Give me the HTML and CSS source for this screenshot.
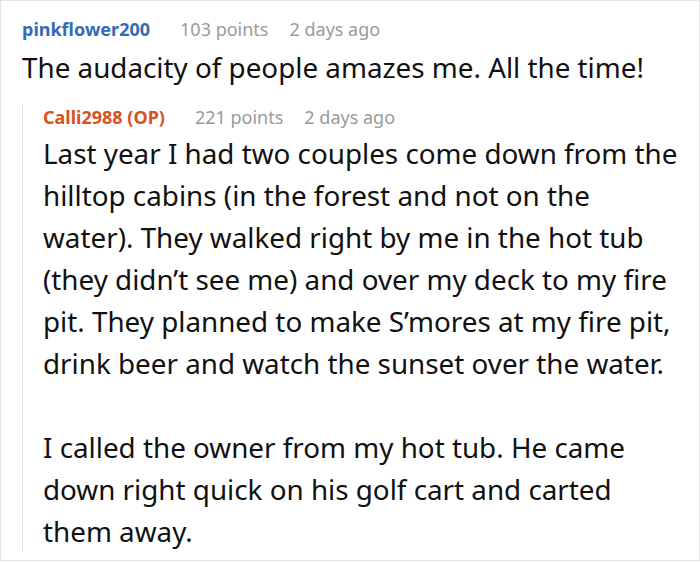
FILE: index.html
```html
<!DOCTYPE html>
<html lang="en">
<head>
<meta charset="utf-8">
<title>Comment thread</title>
<link rel="stylesheet" href="styles.css">
</head>
<body>
<div class="card">
  <div class="comment">
    <div class="meta">
      <span class="user user-blue">pinkflower200</span>
      <span class="info">103 points</span>
      <span class="info">2 days ago</span>
    </div>
    <p class="text">The audacity of people amazes me. All the time!</p>
    <div class="reply">
      <div class="meta">
        <span class="user user-op">Calli2988 (OP)</span>
        <span class="info">221 points</span>
        <span class="info">2 days ago</span>
      </div>
      <div class="reply-body">
        <p class="text">Last year I had two couples come down from the hilltop cabins (in the forest and not on the water). They walked right by me in the hot tub (they didn’t see me) and over my deck to my fire pit. They planned to make S’mores at my fire pit, drink beer and watch the sunset over the water.</p>
        <p class="text">I called the owner from my hot tub. He came down right quick on his golf cart and carted them away.</p>
      </div>
    </div>
  </div>
</div>
</body>
</html>
```

FILE: styles.css
```css
html, body {
  margin: 0;
  padding: 0;
  background: #ffffff;
}

body {
  font-family: "Noto Sans", "Open Sans", sans-serif;
  color: #111111;
}

.card {
  box-sizing: border-box;
  width: 700px;
  height: 561px;
  border: 1px solid #e4e4e4;
  padding: 15px 15px 0 21px;
  overflow: hidden;
}

.meta {
  display: flex;
  align-items: baseline;
  gap: 21px;
  font-size: 18px;
  line-height: 27px;
  white-space: nowrap;
}

.user {
  font-weight: 700;
  margin-right: 9px;
}

.user-blue {
  color: #356ab5;
}

.user-op {
  color: #d6531d;
}

.info {
  color: #9a9a9a;
}

.text {
  margin: 0;
  font-size: 27.8px;
  line-height: 42px;
}

.comment > .text {
  margin-top: 3px;
}

.reply {
  margin-top: 28px;
  border-left: 1px solid #e4e4e4;
  padding-left: 20px;
}

.reply .meta {
  margin-top: -12px;
}

.reply-body {
  margin-top: 1px;
  margin-bottom: -11px;
}

.reply-body .text + .text {
  margin-top: 42px;
}
```
